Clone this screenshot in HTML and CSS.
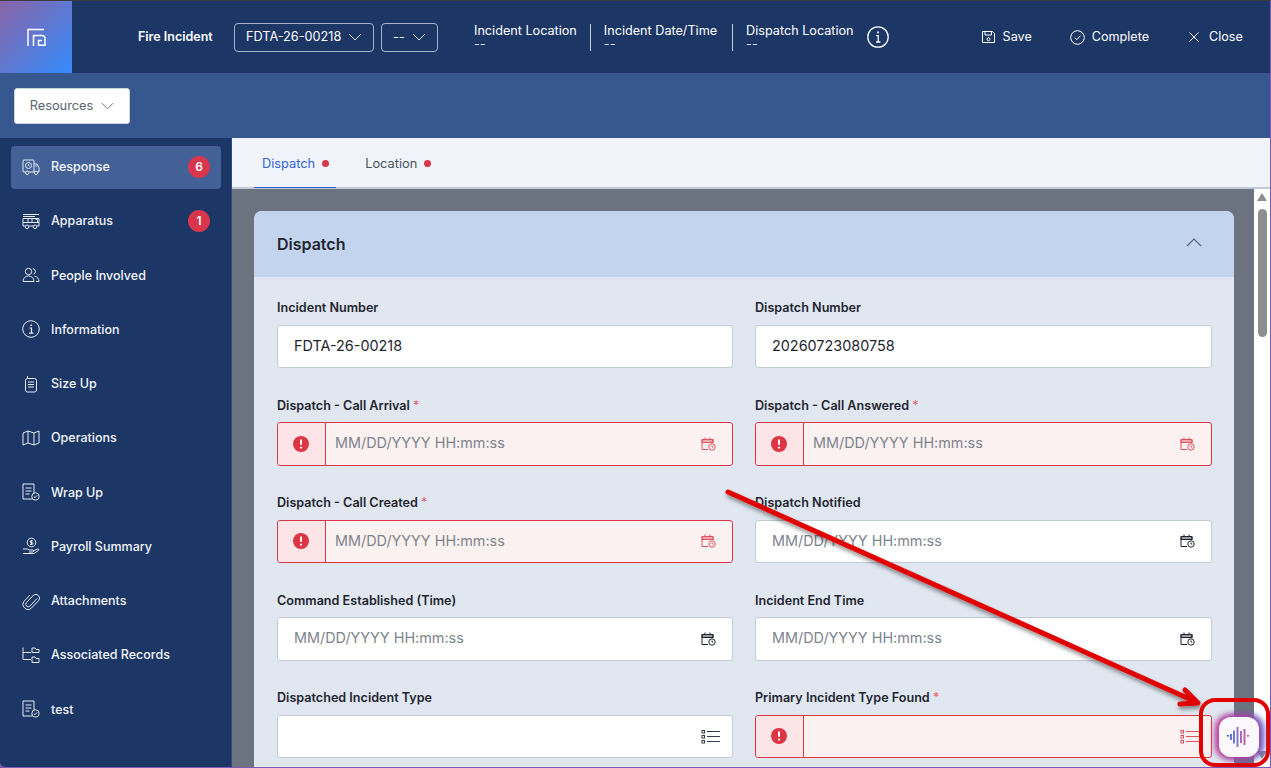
FILE: index.html
```html
<!DOCTYPE html>
<html lang="en">
<head>
  <meta charset="UTF-8">
  <meta name="viewport" content="width=device-width, initial-scale=1.0">
  <title>Fire Incident</title>
  <link rel="stylesheet" href="styles.css">
</head>
<body>

<div class="window">
  <!-- Top header -->
  <header class="header">
    <div class="logo">
      <svg width="19" height="18" viewBox="0 0 19 18" fill="none" stroke="#fff" stroke-width="1.5">
        <path d="M1 18V1.500H17"/>
        <path d="M6.500 18V7.500H15a3 3 0 0 1 3 3V17.200H11.500V12.500H15"/>
      </svg>
    </div>
    <div class="record-title">Fire Incident</div>
    <button class="head-select head-select-wide"><span>FDTA-26-00218</span>
      <svg class="chev" width="14" height="8" viewBox="0 0 14 8" fill="none" stroke="currentColor"><path d="M1 1l6 6 6-6"/></svg>
    </button>
    <button class="head-select head-select-small"><span>--</span>
      <svg class="chev" width="14" height="8" viewBox="0 0 14 8" fill="none" stroke="currentColor"><path d="M1 1l6 6 6-6"/></svg>
    </button>
    <div class="summary">
      <div class="summary-item summary-first">
        <div>Incident Location</div>
        <div class="summary-value">--</div>
      </div>
      <div class="summary-item">
        <div>Incident Date/Time</div>
        <div class="summary-value">--</div>
      </div>
      <div class="summary-item summary-last">
        <div>Dispatch Location</div>
        <div class="summary-value">--</div>
      </div>
      <svg class="summary-info" width="22" height="22" viewBox="0 0 22 22" fill="none" stroke="#fff" stroke-width="1.3">
        <circle cx="11" cy="11" r="10.2"/>
        <path d="M9.2 9.6H11.2V15.8M9 16H13.4"/>
        <path d="M11 5.6v1.6" stroke-width="1.8"/>
      </svg>
    </div>
    <div class="actions">
      <a class="action action-save">
        <svg width="13" height="14" viewBox="0 0 13 14" fill="none" stroke="#fff"><path d="M.5 1.500H10.500L12.500 3.500V12.500H.5Z"/><path d="M3 1.500V5H9.500V1.500"/><circle cx="6.500" cy="9.200" r="1.500"/></svg>
        <span>Save</span>
      </a>
      <a class="action action-complete">
        <svg width="15" height="15" viewBox="0 0 15 15" fill="none" stroke="#fff"><circle cx="7.500" cy="7.500" r="6.800"/><path d="M4.800 7.700l2 2 3.600-4"/></svg>
        <span>Complete</span>
      </a>
      <a class="action action-close">
        <svg width="10" height="10" viewBox="0 0 10 10" fill="none" stroke="#fff"><path d="M.5.5l9 9M9.500.5l-9 9"/></svg>
        <span>Close</span>
      </a>
    </div>
  </header>

  <!-- Resources bar -->
  <div class="toolbar">
    <button class="resources"><span>Resources</span>
      <svg width="13" height="8" viewBox="0 0 14 8" fill="none" stroke="#5b6470"><path d="M1 1l6 6 6-6"/></svg>
    </button>
  </div>

  <div class="page">
    <!-- Sidebar -->
    <nav class="sidebar">
      <a class="nav-item active">
        <svg class="nav-icon" viewBox="0 0 18 18" fill="none" stroke="currentColor"><path d="M3.500 14H2a1 1 0 0 1-1-1V3a1 1 0 0 1 1-1h9a1 1 0 0 1 1 1v11H7"/><path d="M12 6h3l2 3.500V14h-1.500M12 14h.5"/><circle cx="5.200" cy="14.800" r="1.700"/><circle cx="14" cy="14.800" r="1.700"/><circle cx="6.500" cy="7.500" r="3"/><path d="M6.500 6v1.600l1 .6M13.500 8h2"/></svg>
        <span>Response</span><b class="badge">6</b>
      </a>
      <a class="nav-item">
        <svg class="nav-icon" viewBox="0 0 18 18" fill="none" stroke="currentColor"><path d="M1 2.500h16M1 4.500h12"/><path d="M3 14H1V6.500h16V14h-2M7 14h4"/><path d="M1 10.500h16M6 6.500v4M10 6.500v4M13.500 7.500h2v3"/><circle cx="5" cy="14.800" r="1.800"/><circle cx="13" cy="14.800" r="1.800"/></svg>
        <span>Apparatus</span><b class="badge">1</b>
      </a>
      <a class="nav-item">
        <svg class="nav-icon" viewBox="0 0 18 18" fill="none" stroke="currentColor"><circle cx="6.500" cy="5.500" r="3.200"/><path d="M10.800 2.600a3 3 0 0 1 2.600 2.900 3 3 0 0 1-2 2.700"/><path d="M1 15.500c0-3.500 2.500-5.500 5.500-5.500s5.500 2 5.500 5.500Z"/><path d="M12.500 10.200c2.600.3 4.500 2.300 4.500 5.300h-3"/></svg>
        <span>People Involved</span>
      </a>
      <a class="nav-item">
        <svg class="nav-icon" viewBox="0 0 18 18" fill="none" stroke="currentColor"><circle cx="9" cy="9" r="8.300"/><path d="M7.500 8h2v5M7 13.200h4.500" stroke-width="1.200"/><path d="M9.200 4.500v1.500" stroke-width="1.700"/></svg>
        <span>Information</span>
      </a>
      <a class="nav-item">
        <svg class="nav-icon" viewBox="0 0 18 18" fill="none" stroke="currentColor"><rect x="3.500" y="3.500" width="11" height="13.500" rx="2"/><path d="M5.500 3.500V1M6 7h6M6 9.500h6M6 12h6"/></svg>
        <span>Size Up</span>
      </a>
      <a class="nav-item">
        <svg class="nav-icon" viewBox="0 0 18 18" fill="none" stroke="currentColor"><path d="M1 4l5-2 6 2 5-2v12l-5 2-6-2-5 2Z"/><path d="M6 2v12M12 4v12"/></svg>
        <span>Operations</span>
      </a>
      <a class="nav-item">
        <svg class="nav-icon" viewBox="0 0 18 18" fill="none" stroke="currentColor"><path d="M10 16H1V1h11v9"/><path d="M3.500 5h6M3.500 8h6M3.500 11h4"/><circle cx="13.500" cy="13.500" r="3.700"/><path d="M11.800 13.500l1.200 1.200 2.200-2.300"/></svg>
        <span>Wrap Up</span>
      </a>
      <a class="nav-item">
        <svg class="nav-icon" viewBox="0 0 18 18" fill="none" stroke="currentColor"><circle cx="9.500" cy="5.500" r="4.300"/><path d="M10.800 3.800H9a.9.9 0 0 0 0 1.800h1a.9.9 0 0 1 0 1.800H8M9.500 3v5"/><path d="M1 12h4.500l2 1h3a1 1 0 0 1 0 2H7M11 14l4.500-2c1-.3 1.800.6 1 1.400L12 16.500H1"/></svg>
        <span>Payroll Summary</span>
      </a>
      <a class="nav-item">
        <svg class="nav-icon" viewBox="0 0 18 18" fill="none" stroke="currentColor"><path d="M15 6.500L8 14a2.400 2.400 0 0 1-3.500-3.400l7-7.500a3.800 3.800 0 0 1 5.300 5.300L9.500 16a5 5 0 0 1-7.300-6.800L8 3"/></svg>
        <span>Attachments</span>
      </a>
      <a class="nav-item">
        <svg class="nav-icon" viewBox="0 0 18 18" fill="none" stroke="currentColor"><path d="M1 1.500V13.500H9M1 6.500H9"/><path d="M10 6.500V2h3l1 1.500h3v3ZM10 16.500V11h3l1 1.500h3v4Z"/></svg>
        <span>Associated Records</span>
      </a>
      <a class="nav-item">
        <svg class="nav-icon" viewBox="0 0 18 18" fill="none" stroke="currentColor"><path d="M10 16H1V1h11v9"/><path d="M3.500 5h6M3.500 8h6M3.500 11h4"/><circle cx="13.500" cy="13.500" r="3.700"/><path d="M11.800 13.500l1.200 1.200 2.200-2.300"/></svg>
        <span>test</span>
      </a>
    </nav>

    <main class="main">
      <!-- Tabs -->
      <div class="tabs">
        <a class="tab tab-active">Dispatch<i class="dot"></i></a>
        <a class="tab">Location<i class="dot"></i></a>
      </div>

      <div class="content-wrap">
        <div class="content">
          <section class="card">
            <div class="card-head">
              <h2>Dispatch</h2>
              <svg class="card-chev" width="16" height="9" viewBox="0 0 16 9" fill="none" stroke="#56657c" stroke-width="1.200"><path d="M1 8l7-7 7 7"/></svg>
            </div>
            <div class="form-grid">
              <div class="field">
                <label>Incident Number</label>
                <div class="input"><span class="value">FDTA-26-00218</span></div>
              </div>
              <div class="field">
                <label>Dispatch Number</label>
                <div class="input"><span class="value">20260723080758</span></div>
              </div>
              <div class="field">
                <label>Dispatch - Call Arrival <em>*</em></label>
                <div class="input error">
                  <div class="err-box"><svg width="16" height="16" viewBox="0 0 16 16"><circle cx="8" cy="8" r="8" fill="#dc3545"/><path d="M8 3.600v5.200M8 10.800v1.600" stroke="#fff" stroke-width="2"/></svg></div>
                  <span class="placeholder">MM/DD/YYYY HH:mm:ss</span>
                  <svg class="cal" width="15" height="14" viewBox="0 0 15 14" fill="none" stroke="currentColor"><path d="M7 12.500H1V2.500h11V6"/><path d="M1 2.500h11v3H1Z" fill="currentColor" fill-opacity=".45"/><path d="M4 .5v2M9 .5v2"/><circle cx="11" cy="10" r="3.200"/><path d="M11 8.500V10h1.300"/></svg>
                </div>
              </div>
              <div class="field">
                <label>Dispatch - Call Answered <em>*</em></label>
                <div class="input error">
                  <div class="err-box"><svg width="16" height="16" viewBox="0 0 16 16"><circle cx="8" cy="8" r="8" fill="#dc3545"/><path d="M8 3.600v5.200M8 10.800v1.600" stroke="#fff" stroke-width="2"/></svg></div>
                  <span class="placeholder">MM/DD/YYYY HH:mm:ss</span>
                  <svg class="cal" width="15" height="14" viewBox="0 0 15 14" fill="none" stroke="currentColor"><path d="M7 12.500H1V2.500h11V6"/><path d="M1 2.500h11v3H1Z" fill="currentColor" fill-opacity=".45"/><path d="M4 .5v2M9 .5v2"/><circle cx="11" cy="10" r="3.200"/><path d="M11 8.500V10h1.300"/></svg>
                </div>
              </div>
              <div class="field">
                <label>Dispatch - Call Created <em>*</em></label>
                <div class="input error">
                  <div class="err-box"><svg width="16" height="16" viewBox="0 0 16 16"><circle cx="8" cy="8" r="8" fill="#dc3545"/><path d="M8 3.600v5.200M8 10.800v1.600" stroke="#fff" stroke-width="2"/></svg></div>
                  <span class="placeholder">MM/DD/YYYY HH:mm:ss</span>
                  <svg class="cal" width="15" height="14" viewBox="0 0 15 14" fill="none" stroke="currentColor"><path d="M7 12.500H1V2.500h11V6"/><path d="M1 2.500h11v3H1Z" fill="currentColor" fill-opacity=".45"/><path d="M4 .5v2M9 .5v2"/><circle cx="11" cy="10" r="3.200"/><path d="M11 8.500V10h1.300"/></svg>
                </div>
              </div>
              <div class="field">
                <label>Dispatch Notified</label>
                <div class="input">
                  <span class="placeholder">MM/DD/YYYY HH:mm:ss</span>
                  <svg class="cal" width="15" height="14" viewBox="0 0 15 14" fill="none" stroke="currentColor"><path d="M7 12.500H1V2.500h11V6"/><path d="M1 2.500h11v3H1Z" fill="currentColor" fill-opacity=".45"/><path d="M4 .5v2M9 .5v2"/><circle cx="11" cy="10" r="3.200"/><path d="M11 8.500V10h1.300"/></svg>
                </div>
              </div>
              <div class="field">
                <label>Command Established (Time)</label>
                <div class="input">
                  <span class="placeholder">MM/DD/YYYY HH:mm:ss</span>
                  <svg class="cal" width="15" height="14" viewBox="0 0 15 14" fill="none" stroke="currentColor"><path d="M7 12.500H1V2.500h11V6"/><path d="M1 2.500h11v3H1Z" fill="currentColor" fill-opacity=".45"/><path d="M4 .5v2M9 .5v2"/><circle cx="11" cy="10" r="3.200"/><path d="M11 8.500V10h1.300"/></svg>
                </div>
              </div>
              <div class="field">
                <label>Incident End Time</label>
                <div class="input">
                  <span class="placeholder">MM/DD/YYYY HH:mm:ss</span>
                  <svg class="cal" width="15" height="14" viewBox="0 0 15 14" fill="none" stroke="currentColor"><path d="M7 12.500H1V2.500h11V6"/><path d="M1 2.500h11v3H1Z" fill="currentColor" fill-opacity=".45"/><path d="M4 .5v2M9 .5v2"/><circle cx="11" cy="10" r="3.200"/><path d="M11 8.500V10h1.300"/></svg>
                </div>
              </div>
              <div class="field">
                <label>Dispatched Incident Type</label>
                <div class="input">
                  <svg class="list-icon" width="19" height="15" viewBox="0 0 19 15" fill="none" stroke="currentColor"><rect x="1" y="1.500" width="2.500" height="2.500"/><rect x="1" y="6.500" width="2.500" height="2.500"/><rect x="1" y="11.500" width="2.500" height="2.500"/><path d="M6 2.500h13M6 7.500h13M6 12.500h13"/></svg>
                </div>
              </div>
              <div class="field">
                <label>Primary Incident Type Found <em>*</em></label>
                <div class="input error">
                  <div class="err-box"><svg width="16" height="16" viewBox="0 0 16 16"><circle cx="8" cy="8" r="8" fill="#dc3545"/><path d="M8 3.600v5.200M8 10.800v1.600" stroke="#fff" stroke-width="2"/></svg></div>
                  <svg class="list-icon" width="19" height="15" viewBox="0 0 19 15" fill="none" stroke="currentColor"><rect x="1" y="1.500" width="2.500" height="2.500"/><rect x="1" y="6.500" width="2.500" height="2.500"/><rect x="1" y="11.500" width="2.500" height="2.500"/><path d="M6 2.500h13M6 7.500h13M6 12.500h13"/></svg>
                </div>
              </div>
            </div>
          </section>
        </div>
        <!-- Scrollbar -->
        <div class="scrollbar">
          <i class="arrow-up"></i>
          <div class="thumb"></div>
          <i class="arrow-down"></i>
        </div>
      </div>
    </main>
  </div>

  <!-- Annotation drawn over the screenshot -->
  <svg class="annotation" width="1271" height="768" viewBox="0 0 1271 768" fill="none">
    <defs>
      <filter id="arrowShadow" x="-5%" y="-5%" width="110%" height="115%">
        <feDropShadow dx="1" dy="3" stdDeviation="2" flood-color="#000" flood-opacity=".45"/>
      </filter>
    </defs>
    <g filter="url(#arrowShadow)">
      <path d="M728 492L1194 701" stroke="#e00000" stroke-width="5" stroke-linecap="round"/>
      <path d="M1185 690L1198 703L1180 704" stroke="#e00000" stroke-width="5" stroke-linecap="round" stroke-linejoin="round"/>
    </g>
    <rect x="1201" y="700" width="67" height="65" rx="14" stroke="#e00000" stroke-width="4"/>
  </svg>

  <button class="voice">
    <svg width="26" height="22" viewBox="0 0 26 22" fill="none" stroke-width="2">
      <path d="M.5 9h3L2 11.500Z" fill="#4a70e0"/>
      <path d="M5 8v6" stroke="#5d78dc"/>
      <path d="M8 4.500v13" stroke="#6a7ad8"/>
      <path d="M11.500 1v20" stroke="#8c78c8"/>
      <path d="M15 5v12" stroke="#a56cb8"/>
      <path d="M18.500 3v16" stroke="#c060a8"/>
      <path d="M20.500 9h3L22 11.500Z" fill="#d85c98"/>
    </svg>
  </button>
</div>

</body>
</html>
```

FILE: styles.css
```css
/* Basic page frame */
* {
  box-sizing: border-box;
}

html, body {
  margin: 0;
  height: 100%;
  overflow: hidden;
}

body {
  font-family: Inter, "Noto Sans", Arial, sans-serif;
  font-size: 13px;
  color: #1f2530;
  background-color: #6f5ca8;
}

.window {
  position: relative;
  width: 1271px;
  height: 768px;
  display: flex;
  flex-direction: column;
  overflow: hidden;
  border-top: 1px solid #3b3b42;
  border-right: 1px solid #7a5bb5;
  border-bottom: 1px solid #7a5bb5;
  border-bottom-left-radius: 6px;
}

/* Header */
.header {
  height: 72px;
  flex-shrink: 0;
  display: flex;
  align-items: center;
  background-color: #1c3666;
  color: #fff;
}

.logo {
  width: 72px;
  height: 72px;
  display: flex;
  align-items: center;
  justify-content: center;
  background: linear-gradient(135deg, #8a63a8 0%, #5f78d0 50%, #338bff 100%);
}

.record-title {
  margin-left: 66px;
  width: 96px;
  padding-bottom: 2px;
  font-weight: 600;
  font-size: 12.500px;
}

.head-select {
  height: 29px;
  display: flex;
  align-items: center;
  justify-content: space-between;
  padding: 0 11px 0 11px;
  background: transparent;
  color: #fff;
  border: 1px solid #aab4c6;
  border-radius: 4px;
  font: inherit;
  font-size: 12.700px;
}

.head-select span {
  padding-bottom: 2px;
}

.head-select-wide {
  width: 140px;
}

.head-select-small {
  width: 57px;
  margin-left: 7px;
}

.chev {
  color: #d5dbe6;
}

.summary {
  margin-left: 36px;
  display: flex;
  align-items: center;
  font-size: 12.650px;
  line-height: 13px;
}

.summary-item {
  height: 27px;
  padding: 0 15px 0 13px;
  border-right: 1px solid #c8d0de;
}

.summary-first {
  padding-left: 0;
  padding-right: 13px;
}

.summary-last {
  border-right: none;
  padding-right: 13px;
}

.summary-value {
  color: #d8deea;
}

.actions {
  display: flex;
  align-items: center;
  margin-left: 93px;
  font-size: 12.600px;
}

.action {
  display: flex;
  align-items: center;
  gap: 8px;
}

.action span {
  padding-bottom: 2px;
}

.action-save {
  margin-right: 38px;
}

.action-complete {
  gap: 7px;
  margin-right: 40px;
}

.action-close {
  gap: 10px;
}

/* Resources bar */
.toolbar {
  height: 65px;
  flex-shrink: 0;
  display: flex;
  align-items: center;
  padding-left: 14px;
  background-color: #37578f;
}

.resources {
  width: 116px;
  height: 36px;
  display: flex;
  align-items: center;
  justify-content: center;
  gap: 8px;
  background-color: #fff;
  border: 1px solid #ccd3de;
  border-radius: 3px;
  color: #5b6470;
  font: inherit;
  font-size: 12.800px;
}

.page {
  flex: 1;
  min-height: 0;
  display: flex;
}

/* Sidebar */
.sidebar {
  width: 232px;
  flex-shrink: 0;
  display: flex;
  flex-direction: column;
  gap: 11.250px;
  padding: 8px 10px 0 11px;
  background-color: #1c3666;
  border-right: 1px solid #2f4a7c;
}

.nav-item {
  height: 43px;
  flex-shrink: 0;
  display: flex;
  align-items: center;
  padding: 0 11px 2px 11px;
  border-radius: 4px;
  color: #f2f5fa;
  font-weight: 500;
  font-size: 12.500px;
}

.nav-item.active {
  background-color: #436196;
}

.nav-icon {
  width: 18px;
  height: 18px;
  margin-right: 11px;
  color: #e6ebf3;
}

.badge {
  margin-left: auto;
  width: 22px;
  height: 22px;
  display: flex;
  align-items: center;
  justify-content: center;
  border-radius: 50%;
  background-color: #d9364b;
  color: #fff;
  font-size: 12px;
  font-weight: 600;
}

/* Main area */
.main {
  flex: 1;
  min-width: 0;
  display: flex;
  flex-direction: column;
}

.tabs {
  height: 51px;
  flex-shrink: 0;
  display: flex;
  padding-left: 22px;
  background-color: #f0f3f9;
  border-bottom: 2px solid #c3cad6;
}

.tab {
  height: 50px;
  display: flex;
  align-items: center;
  gap: 7px;
  padding: 0 7px 0 8px;
  margin-right: 21px;
  font-size: 12.800px;
  color: #4a5260;
}

.tab-active {
  color: #2f62d8;
  box-shadow: inset 0 -1px 0 #2f62d8;
}

.dot {
  width: 7px;
  height: 7px;
  border-radius: 50%;
  background-color: #d9364b;
}

.content-wrap {
  flex: 1;
  min-height: 0;
  display: flex;
}

.content {
  flex: 1;
  min-width: 0;
  overflow: hidden;
  padding: 22px 20px 0 22px;
  background-color: #6c7380;
}

.card {
  border-radius: 8px 8px 0 0;
  background-color: #e0e7f0;
}

.card-head {
  height: 66px;
  display: flex;
  align-items: center;
  justify-content: space-between;
  padding: 0 32px 0 23px;
  border-radius: 8px 8px 0 0;
  background-color: #c3d5ee;
}

.card-head h2 {
  margin: 0;
  font-size: 16px;
  font-weight: 600;
  color: #1f2530;
}

.card-chev {
  margin-bottom: 4px;
}

.form-grid {
  display: grid;
  grid-template-columns: 456px 457px;
  column-gap: 22px;
  row-gap: 29.600px;
  padding: 23.300px 22px 22px 23px;
}

.field label {
  display: block;
  height: 16px;
  margin-bottom: 8.400px;
  font-size: 12.600px;
  line-height: 16px;
  font-weight: 600;
  color: #1f2530;
}

.field em {
  color: #e8606f;
  font-style: normal;
  font-weight: 400;
}

.input {
  height: 43.500px;
  display: flex;
  align-items: center;
  padding: 0 12px 0 16px;
  background-color: #fff;
  border: 1px solid #c3cad6;
  border-radius: 3px;
  font-size: 14.400px;
}

.value,
.placeholder {
  padding-bottom: 2px;
}

.value {
  color: #1f2530;
}

.placeholder {
  color: #7d838c;
}

.cal {
  margin-left: auto;
  margin-right: 4px;
  color: #1f2530;
}

.list-icon {
  margin-left: auto;
  color: #333b46;
}

.input.error {
  padding-left: 0;
  background-color: #fcf1f1;
  border-color: #d9364b;
}

.input.error .cal,
.input.error .list-icon {
  color: #e0505f;
}

.err-box {
  width: 48px;
  height: 100%;
  margin-right: 9px;
  padding-right: 2px;
  display: flex;
  align-items: center;
  justify-content: center;
  flex-shrink: 0;
  background-color: #fde4e6;
  border-right: 1px solid #d9364b;
  border-radius: 3px 0 0 3px;
}

/* Scrollbar */
.scrollbar {
  width: 16px;
  flex-shrink: 0;
  display: flex;
  flex-direction: column;
  align-items: center;
  background-color: #fff;
  padding-top: 4px;
}

.arrow-up {
  width: 0;
  height: 0;
  border-left: 5px solid transparent;
  border-right: 5px solid transparent;
  border-bottom: 8px solid #8e8e8e;
}

.arrow-down {
  width: 0;
  height: 0;
  margin-top: auto;
  margin-bottom: 8px;
  border-left: 5px solid transparent;
  border-right: 5px solid transparent;
  border-top: 8px solid #8e8e8e;
}

.thumb {
  width: 9px;
  height: 128px;
  margin-top: 8px;
  border-radius: 5px;
  background-color: #8e8e8e;
}

/* Overlays */
.annotation {
  position: absolute;
  left: 0;
  top: -1px;
  pointer-events: none;
}

.voice {
  position: absolute;
  left: 1219px;
  top: 716px;
  width: 40px;
  height: 40px;
  display: flex;
  align-items: center;
  justify-content: center;
  padding: 0;
  background-color: #fbf8fc;
  border: none;
  border-radius: 12px;
  box-shadow: -2px 0 6px 2px #c23c96, 3px 0 6px 2px #5a5fc8;
}
```
